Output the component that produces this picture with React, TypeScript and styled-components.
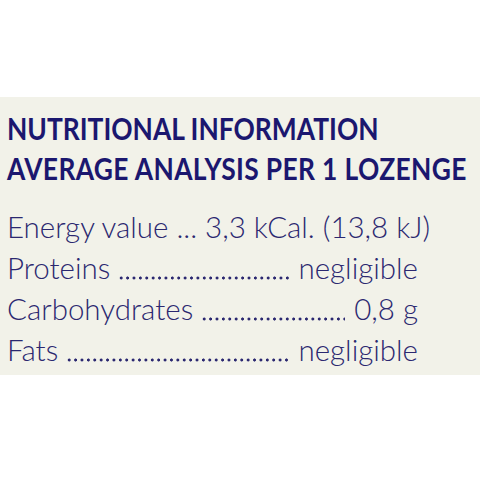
import React from "react"
import styled, { createGlobalStyle } from "styled-components"

const GlobalStyle = createGlobalStyle`
  html, body {
    margin: 0;
    padding: 0;
    background: #ffffff;
  }
  body {
    width: 480px;
    height: 480px;
    overflow: hidden;
  }
`

type Row = { label: string; value: string }

const rows: Row[] = [
    { label: "Proteins", value: "negligible" },
    { label: "Carbohydrates", value: "0,8 g" },
    { label: "Fats", value: "negligible" },
]

const App = () => {
    return (
        <>
            <GlobalStyle />
            <Label>
                <Heading>
                    <HeadLine>NUTRITIONAL INFORMATION</HeadLine>
                    <HeadLine wide>AVERAGE ANALYSIS PER 1 LOZENGE</HeadLine>
                </Heading>
                <Facts>
                    <FactRow>
                        <span>Energy value ... 3,3 kCal. (13,8 kJ)</span>
                    </FactRow>
                    {rows.map((row) => (
                        <FactRow key={row.label}>
                            <span>{row.label}</span>
                            <Leader />
                            <Value>{row.value}</Value>
                        </FactRow>
                    ))}
                </Facts>
            </Label>
        </>
    )
}

export default App

const Label = styled.section`
    margin-top: 97px;
    height: 278px;
    box-sizing: border-box;
    padding: 11px 0 0 7px;
    background: #f2f2e9;
    overflow: hidden;
`

const Heading = styled.div`
    font-family: Lato, "Liberation Sans", sans-serif;
    font-weight: 700;
    font-size: 30px;
    line-height: 40px;
    color: #1b176f;
    transform: scaleX(0.88);
    transform-origin: left center;
`

const HeadLine = styled.div<{ wide?: boolean }>`
    white-space: nowrap;
    letter-spacing: ${(p) => (p.wide ? "0.4px" : "0")};
`

const Facts = styled.div`
    margin-top: 18px;
    width: 411px;
    font-family: Lato, "Liberation Sans", sans-serif;
    font-weight: 300;
    font-size: 29.5px;
    line-height: 41px;
    color: #2b2870;
`

const FactRow = styled.div`
    display: flex;
    white-space: nowrap;
`

const Leader = styled.span`
    flex: 1;
    margin: 0 9px 0 8px;
    background-image: radial-gradient(circle, #2b2870 1.3px, transparent 1.8px);
    background-size: 6.4px 4px;
    background-repeat: repeat-x;
    background-position: 0 28.5px;
`

const Value = styled.span`
    flex: none;
`
